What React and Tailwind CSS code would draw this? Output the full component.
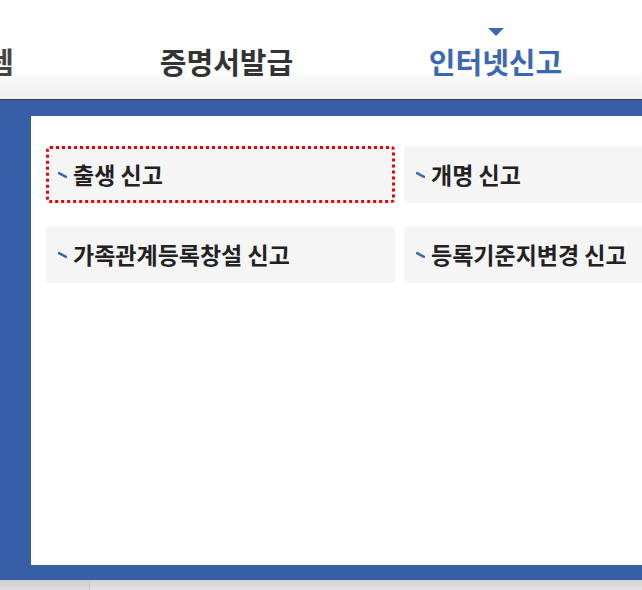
const font = { fontFamily: '"Noto Sans CJK KR", "Noto Sans", sans-serif' };

const reports = [
  { label: '출생 신고', focused: true },
  { label: '개명 신고' },
  { label: '가족관계등록창설 신고' },
  { label: '등록기준지변경 신고' },
];

function Bullet() {
  return (
    <svg width="9" height="6" viewBox="0 0 9 6" className="shrink-0">
      <path d="M1 1.2 L8 4.8" stroke="#3a68b4" strokeWidth="2.6" strokeLinecap="round" />
    </svg>
  );
}

function App() {
  return (
    <div className="w-[642px] h-[590px] overflow-hidden bg-white" style={font}>
      <header className="h-[100px] bg-gradient-to-b from-white from-70% to-[#eeeeee] border-b border-[#3a3a3a] flex items-start pt-[47px]">
        <div className="w-[14px] overflow-hidden flex justify-end text-[29px] font-bold text-[#444] leading-none">
          <span className="shrink-0">시스템</span>
        </div>
        <div className="ml-[78px] w-[269px] shrink-0 text-center text-[29px] font-bold text-[#333] leading-none">
          증명서발급
        </div>
        <div className="relative w-[269px] shrink-0 text-center text-[29px] font-bold text-[#3a68b4] leading-none">
          <span className="absolute left-1/2 -translate-x-1/2 -top-[19px] w-0 h-0 border-l-[8px] border-r-[8px] border-t-[8px] border-l-transparent border-r-transparent border-t-[#3a68b4]" />
          인터넷신고
        </div>
      </header>

      <div className="bg-[#375fa8] pl-[31px] pt-4 pb-[15px]">
        <div className="bg-white h-[449px] pl-[15px] pt-[30px]">
          <div className="grid grid-cols-[349px_349px] gap-x-[9px] gap-y-[23px]">
            {reports.map((r) => (
              <div
                key={r.label}
                className={
                  'h-[57px] rounded-[4px] bg-[#f5f5f5] flex items-center gap-[6px] pl-3 ' +
                  (r.focused ? 'outline-[3px] outline-dotted outline-[#ee0000] -outline-offset-[3px]' : '')
                }
              >
                <Bullet />
                <span className="text-[23px] font-bold text-[#222] leading-none whitespace-nowrap">
                  {r.label}
                </span>
              </div>
            ))}
          </div>
        </div>
      </div>

      <div className="h-[10px] flex">
        <div className="w-[90px] bg-gradient-to-b from-[#cfcfcf] to-[#dcdcdc] border-r border-[#c8c8c8]" />
        <div className="flex-1 bg-gradient-to-b from-[#d3d3d3] to-[#e2e2e2]" />
      </div>
    </div>
  );
}

export default App;
